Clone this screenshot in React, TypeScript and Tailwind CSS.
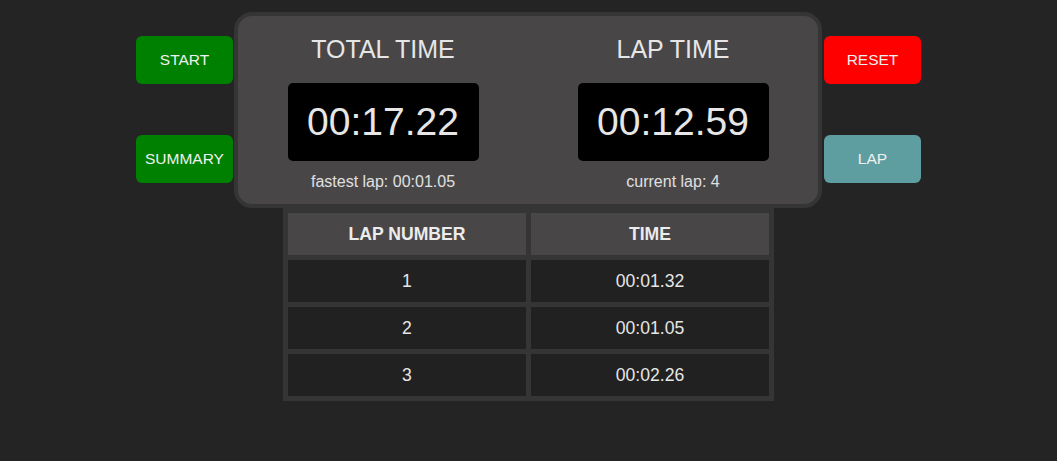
import React from "react";

const font = { fontFamily: '"Liberation Sans", Arial, sans-serif' };

function Btn({ label, color }: { label: string; color: string }) {
  return (
    <button
      className={`w-[97px] h-[48px] rounded-[6px] text-[15.5px] text-[#f0f0f0] flex items-center justify-center ${color}`}
    >
      {label}
    </button>
  );
}

function Clock({ title, value, sub }: { title: string; value: string; sub: string }) {
  return (
    <div className="w-[290px] flex flex-col items-center">
      <div className="mt-[19px] h-[28px] leading-[28px] text-[25px] text-[#e6e6e6]">{title}</div>
      <div className="mt-[20px] w-[191px] h-[78px] bg-black rounded-[5px] flex items-center justify-center text-[39px] text-[#e6e6e6]">
        {value}
      </div>
      <div className="mt-[12px] h-[18px] leading-[18px] text-[16px] text-[#e0e0e0]">{sub}</div>
    </div>
  );
}

export default function App() {
  const laps = [
    ["1", "00:01.32"],
    ["2", "00:01.05"],
    ["3", "00:02.26"],
  ];
  return (
    <div className="w-[1057px] h-[461px] bg-[#242424] pt-[12px]" style={font}>
      <div className="flex justify-center">
        <div className="flex flex-col gap-[51px] pt-[24px]">
          <Btn label="START" color="bg-[#008000]" />
          <Btn label="SUMMARY" color="bg-[#008000]" />
        </div>
        <div className="ml-[1px] w-[588px] h-[196px] rounded-[18px] border-[4px] border-[#353535] bg-[#484647] flex pb-[12px]">
          <Clock title="TOTAL TIME" value="00:17.22" sub="fastest lap: 00:01.05" />
          <Clock title="LAP TIME" value="00:12.59" sub="current lap: 4" />
        </div>
        <div className="ml-[2px] flex flex-col gap-[51px] pt-[24px]">
          <Btn label="RESET" color="bg-[#ff0000]" />
          <Btn label="LAP" color="bg-[#5f9ea0]" />
        </div>
      </div>
      <table className="mx-auto border-separate border-spacing-[5px] bg-[#353535] text-[17.6px]">
        <thead>
          <tr>
            <th className="w-[238px] h-[42px] p-0 bg-[#484647] text-[#ececec] font-bold text-center">LAP NUMBER</th>
            <th className="w-[238px] h-[42px] p-0 bg-[#484647] text-[#ececec] font-bold text-center">TIME</th>
          </tr>
        </thead>
        <tbody>
          {laps.map(([n, t]) => (
            <tr key={n}>
              <td className="w-[238px] h-[42px] p-0 bg-[#212121] text-[#e6e6e6] text-center">{n}</td>
              <td className="w-[238px] h-[42px] p-0 bg-[#212121] text-[#e6e6e6] text-center">{t}</td>
            </tr>
          ))}
        </tbody>
      </table>
    </div>
  );
}
